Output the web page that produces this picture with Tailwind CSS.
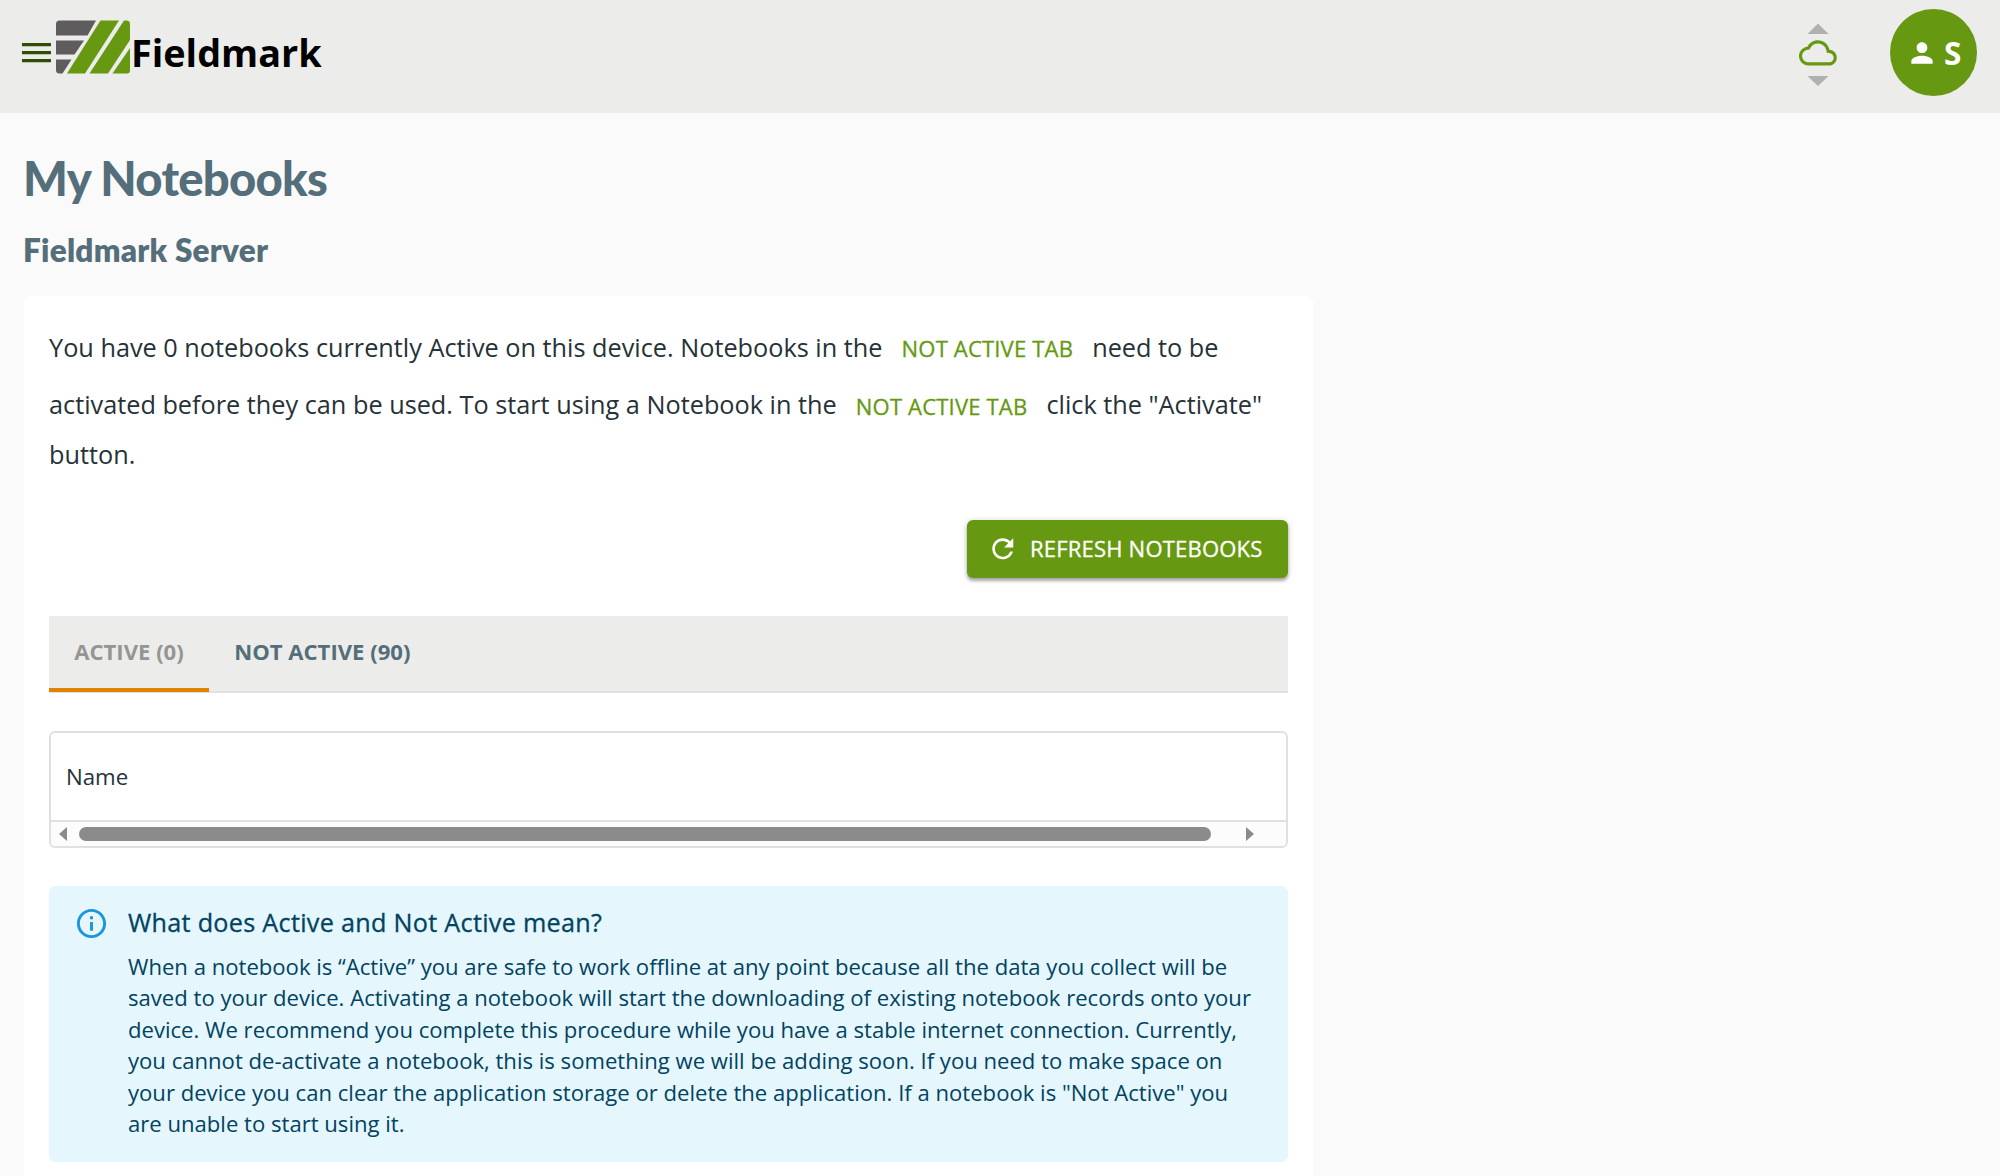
<!DOCTYPE html>
<html lang="en">
<head>
<meta charset="utf-8">
<title>Fieldmark</title>
<script src="https://cdn.jsdelivr.net/npm/@tailwindcss/browser@4"></script>
</head>
<body class="h-[1176px] overflow-hidden bg-[#fafafa] font-['Open_Sans','Noto_Sans',sans-serif] text-[#263238]">
<header class="flex h-[113px] justify-between bg-[#ececea]">
  <div class="flex h-[106px] items-center pl-[22px]">
    <svg class="block h-5 w-[29px]" viewBox="0 0 29 20" fill="#2f4d05"><path d="M0 0h29v3.2H0zM0 8h29v3.2H0zM0 16h29v3.2H0z"/></svg>
    <svg class="-mt-[12px] ml-1 block h-[55px] w-[76px]" viewBox="0 0 76 55">
      <g fill="#5f5c5d"><path d="M4.500 .5H41L32.500 15.500H1V4Q1 .5 4.500 .5z"/><path d="M1 20.500H29L19.500 34.500H1z"/><path d="M1 39.500H16.500L7.500 53.500H4.500Q1 53.500 1 50z"/></g>
      <g fill="#669911"><path d="M45.500 .5H64L30 53.500H12z"/><path d="M69 .5h2.500Q75 .5 75 4V20L53 53.500H34.500z"/><path d="M75 28V50.500Q75 53.500 72 53.500H57.500z"/></g>
    </svg>
    <span class="-mt-px text-[37.8px] leading-[50px] font-bold text-black">Fieldmark</span>
  </div>
  <div class="flex h-[105px] items-center gap-[53px] pr-[23px]">
    <svg class="-ml-px block h-[66px] w-[38px]" viewBox="0 0 38 66"><g fill="#b0b0af"><path d="M8.500 14L19 3.500 29.500 14zM8.500 56H29.500L19 66z"/></g><g transform="translate(0 14) scale(1.575)"><path fill="#669911" d="M19.350 10.040C18.670 6.590 15.640 4 12 4 9.110 4 6.600 5.640 5.350 8.040 2.340 8.360 0 10.910 0 14c0 3.310 2.690 6 6 6h13c2.760 0 5-2.240 5-5 0-2.640-2.050-4.780-4.650-4.960zM19 18H6c-2.210 0-4-1.790-4-4 0-2.050 1.530-3.760 3.560-3.970l1.070-.11.5-.95C8.080 7.140 9.940 6 12 6c2.620 0 4.880 1.860 5.390 4.430l.3 1.500 1.530.11c1.560.1 2.780 1.410 2.780 2.960 0 1.650-1.350 3-3 3z"/></g></svg>
    <div class="flex size-[87px] items-center rounded-full bg-[#669911] pl-[16px] text-[31.5px] font-bold text-white">
      <svg class="size-[32px]" viewBox="0 0 24 24" fill="currentColor"><path d="M12 12c2.210 0 4-1.790 4-4s-1.790-4-4-4-4 1.790-4 4 1.790 4 4 4zm0 2c-2.670 0-8 1.340-8 4v2h16v-2c0-2.660-5.330-4-8-4z"/></svg>
      <span class="ml-[6px]">S</span>
    </div>
  </div>
</header>
<main class="pl-6">
  <h1 class="-ml-px pt-[37px] font-[Lato] text-[47.2px] leading-[56px] font-black tracking-[-0.0156em] text-[#546e7a]">My Notebooks</h1>
  <h2 class="-ml-px mt-[24px] font-[Lato] text-[31.5px] leading-[40px] font-extrabold tracking-[0.0075em] text-[#546e7a]">Fieldmark Server</h2>
  <section class="mt-[25.500px] h-[900px] w-[1289px] rounded-md bg-white px-[25px] pt-[25px]">
    <p class="text-[25.28px] leading-[37.8px] whitespace-nowrap">
      You have 0 notebooks currently Active on this device. Notebooks in the <button class="inline-flex h-[57.5px] items-center px-[12.600px] align-middle text-[22.05px] font-medium tracking-[0.16px] text-[#669911] [-webkit-text-stroke:0.3px]">NOT ACTIVE TAB</button> need to be<br>
      activated before they can be used. To start using a Notebook in the <button class="inline-flex h-[57.5px] items-center px-[12.600px] align-middle text-[22.05px] font-medium tracking-[0.16px] text-[#669911] [-webkit-text-stroke:0.3px]">NOT ACTIVE TAB</button> click the "Activate"<br>
      button.
    </p>
    <div class="mt-[46.500px] flex justify-end">
      <button class="flex h-[58px] w-[321px] items-center rounded-md bg-[#669911] pl-[19.500px] text-[22.05px] font-medium tracking-[0.18px] text-white shadow-[0_3px_3px_rgba(0,0,0,.25),0_1px_6px_rgba(0,0,0,.2)] [-webkit-text-stroke:0.3px]">
        <svg class="mr-[12px] size-[31.5px]" viewBox="0 0 24 24" fill="currentColor" stroke="none"><path d="M17.650 6.350C16.200 4.900 14.210 4 12 4c-4.420 0-7.990 3.580-7.990 8s3.570 8 7.990 8c3.730 0 6.840-2.550 7.730-6h-2.080c-.82 2.330-3.040 4-5.650 4-3.310 0-6-2.690-6-6s2.690-6 6-6c1.660 0 3.140.69 4.220 1.780L13 11h7V4l-2.350 2.350z"/></svg>
        REFRESH NOTEBOOKS
      </button>
    </div>
    <div class="mt-[38px] flex h-[77px] border-b-2 border-[#e0e1e1] bg-[#ececea] text-[22.1px] font-bold">
      <div class="flex h-[76px] w-[160px] items-center justify-center border-b-[4px] border-[#e18200] text-[#959593]">ACTIVE (0)</div>
      <div class="flex h-[76px] items-center px-[25.200px] pb-[4px] text-[#546e7a]">NOT ACTIVE (90)</div>
    </div>
    <div class="mt-[38px] h-[117px] overflow-hidden rounded-md border-2 border-[#e0e0e0]">
      <div class="flex h-[89px] items-center border-b-2 border-[#e0e0e0] pl-[15px] text-[22.25px]">Name</div>
      <div class="flex h-[25px] items-center bg-[#fcfcfc] pl-2">
        <svg class="h-[14px] w-2" viewBox="0 0 8 14" fill="#8b8b8b"><path d="M8 0v14L0 7z"/></svg>
        <div class="ml-[12px] h-[14px] w-[1132px] rounded-full bg-[#8b8b8b]"></div>
        <svg class="ml-[35px] h-[14px] w-2" viewBox="0 0 8 14" fill="#8b8b8b"><path d="M0 0v14L8 7z"/></svg>
      </div>
    </div>
    <div class="mt-[38px] flex h-[276px] rounded-md bg-[#e5f6fd] pl-[25px] text-[#014361]">
      <svg class="mt-[20px] size-[35px]" viewBox="0 0 24 24" fill="#1b96dc"><path d="M11 7h2v2h-2zm0 4h2v6h-2zm1-9C6.480 2 2 6.480 2 12s4.480 10 10 10 10-4.480 10-10S17.520 2 12 2zm0 18c-4.410 0-8-3.590-8-8s3.590-8 8-8 8 3.590 8 8-3.590 8-8 8z"/></svg>
      <div class="ml-[19px] pt-[17px]">
        <h3 class="text-[25.2px] leading-[38px] font-medium tracking-[0.29px] [-webkit-text-stroke:0.3px]">What does Active and Not Active mean?</h3>
        <p class="mt-[10px] text-[22.1px] leading-[31.5px] whitespace-nowrap">When a notebook is “Active” you are safe to work offline at any point because all the data you collect will be<br>saved to your device. Activating a notebook will start the downloading of existing notebook records onto your<br>device. We recommend you complete this procedure while you have a stable internet connection. Currently,<br>you cannot de-activate a notebook, this is something we will be adding soon. If you need to make space on<br>your device you can clear the application storage or delete the application. If a notebook is "Not Active" you<br>are unable to start using it.</p>
      </div>
    </div>
  </section>
</main>
</body>
</html>
